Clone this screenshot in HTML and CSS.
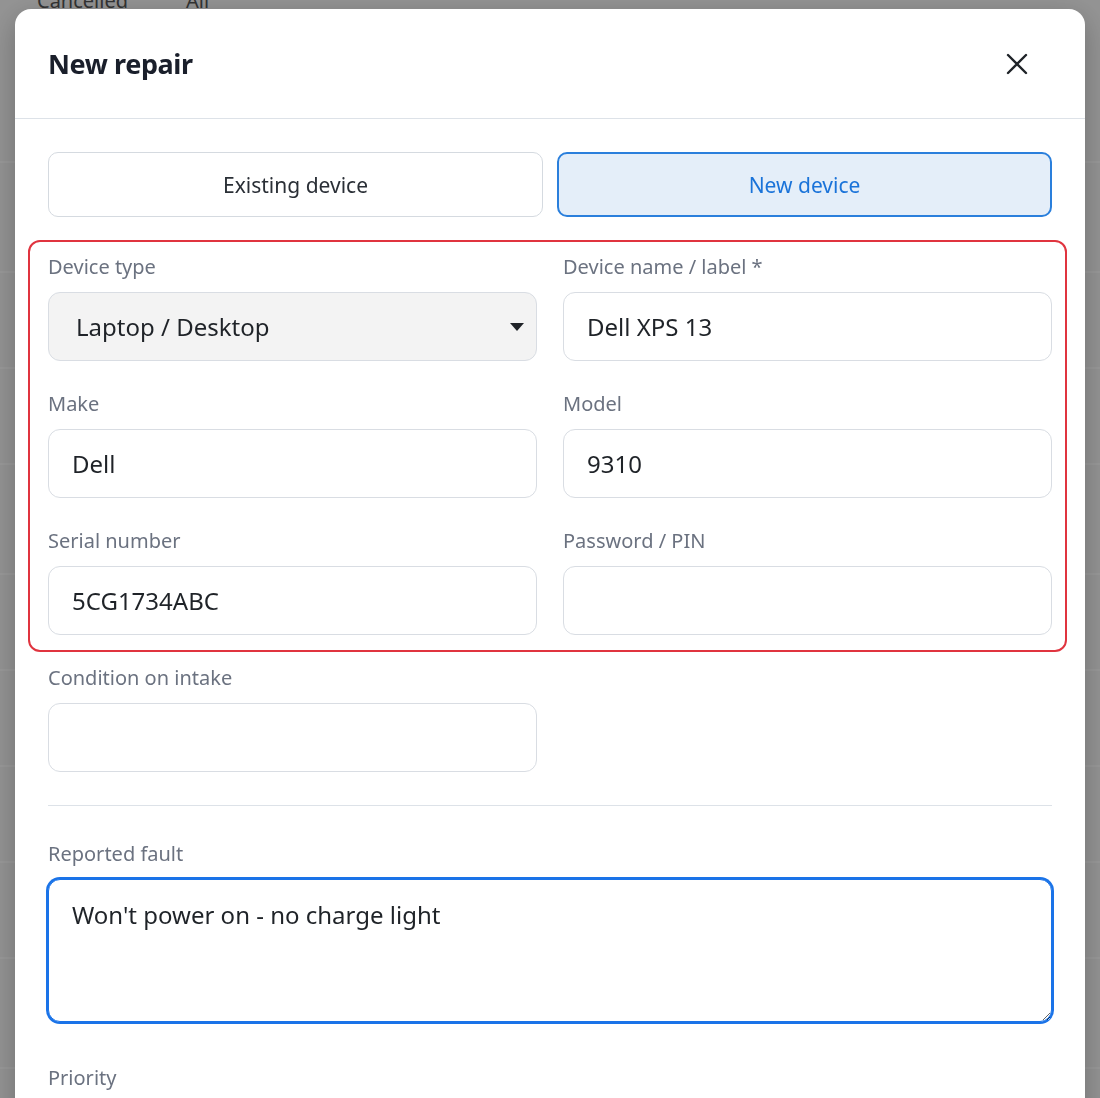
FILE: index.html
```html
<!DOCTYPE html>
<html lang="en">
<head>
  <meta charset="UTF-8">
  <title>New repair</title>
  <link rel="stylesheet" href="styles.css">
</head>
<body>

<div class="page">
  <div class="tabs">
    <span class="tab">Cancelled</span>
    <span class="tab">All</span>
  </div>
  <div class="rows">
    <div class="row"></div>
    <div class="row"></div>
    <div class="row short"></div>
    <div class="row short"></div>
    <div class="row"></div>
    <div class="row short"></div>
    <div class="row short"></div>
    <div class="row short"></div>
    <div class="row short"></div>
    <div class="row"></div>
  </div>
</div>

<div class="overlay">
  <div class="modal">
    <div class="modal-head">
      <h1 class="modal-title">New repair</h1>
      <button class="close-btn" aria-label="Close">
        <svg width="22" height="22" viewBox="0 0 22 22">
          <path d="M2 2 L20 20 M20 2 L2 20" stroke="#1f2328" stroke-width="2.4" stroke-linecap="round" fill="none"/>
        </svg>
      </button>
    </div>

    <div class="modal-body">
      <div class="toggle">
        <button class="toggle-btn">Existing device</button>
        <button class="toggle-btn active">New device</button>
      </div>

      <div class="group">
        <div class="grid">
          <div class="field">
            <label class="label">Device type</label>
            <div class="select-wrap">
              <select class="input select">
                <option>Laptop / Desktop</option>
                <option>Phone</option>
                <option>Tablet</option>
              </select>
              <svg class="caret" width="16" height="10" viewBox="0 0 16 10">
                <path d="M1 1 L15 1 L8 9 Z" fill="#1f2328"/>
              </svg>
            </div>
          </div>
          <div class="field">
            <label class="label">Device name / label *</label>
            <input class="input" type="text" value="Dell XPS 13">
          </div>
          <div class="field">
            <label class="label">Make</label>
            <input class="input" type="text" value="Dell">
          </div>
          <div class="field">
            <label class="label">Model</label>
            <input class="input" type="text" value="9310">
          </div>
          <div class="field">
            <label class="label">Serial number</label>
            <input class="input" type="text" value="5CG1734ABC">
          </div>
          <div class="field">
            <label class="label">Password / PIN</label>
            <input class="input" type="text" value="">
          </div>
        </div>
      </div>

      <div class="grid single">
        <div class="field">
          <label class="label">Condition on intake</label>
          <input class="input" type="text" value="">
        </div>
      </div>

      <hr class="divider">

      <div class="field fault">
        <label class="label">Reported fault</label>
        <textarea class="input textarea">Won't power on - no charge light</textarea>
      </div>

      <div class="field priority">
        <label class="label">Priority</label>
      </div>
    </div>
  </div>
</div>

</body>
</html>
```

FILE: styles.css
```css
* {
  box-sizing: border-box;
}
body {
  margin: 0;
  font-family: "Noto Sans", "Open Sans", sans-serif;
  background: #f6f6f6;
  color: #1f2328;
}

/* page behind the dialog */
.page {
  height: 1098px;
  overflow: hidden;
}
.tabs {
  display: flex;
  gap: 58px;
  padding-left: 37px;
  margin-top: -13px;
  font-size: 20px;
  color: #555;
}
.rows {
  margin-top: 39px;
}
.row {
  height: 110px;
  border-bottom: 2px solid #ffffff;
}
.row.short {
  height: 96px;
}

.overlay {
  position: fixed;
  inset: 0;
  background: rgba(0, 0, 0, 0.4);
  padding: 9px 15px 0;
  overflow: hidden;
}
.modal {
  width: 1070px;
  background: #ffffff;
  border-radius: 16px;
  box-shadow: 0 8px 30px rgba(0, 0, 0, 0.25);
  padding-bottom: 60px;
}
.modal-head {
  height: 110px;
  display: flex;
  align-items: center;
  justify-content: space-between;
  padding: 0 46px 0 33px;
  border-bottom: 1px solid #dde2e8;
}
.modal-title {
  margin: 0;
  font-size: 27px;
  font-weight: 700;
  color: #1a1f2b;
  letter-spacing: -0.4px;
}
.close-btn {
  width: 44px;
  height: 44px;
  border: none;
  background: none;
  display: flex;
  align-items: center;
  justify-content: center;
  padding: 0;
  cursor: pointer;
}

.modal-body {
  padding: 33px 33px 0;
}

.toggle {
  display: grid;
  grid-template-columns: 1fr 1fr;
  gap: 14px;
}
.toggle-btn {
  height: 65px;
  border: 1px solid #d5dae0;
  border-radius: 10px;
  background: #ffffff;
  font-family: inherit;
  font-size: 21px;
  color: #2a2f36;
  cursor: pointer;
}
.toggle-btn.active {
  border: 2px solid #2a7fdc;
  background: #e4eef9;
  color: #1a73d9;
}

.group {
  margin: 23px -15px 0 -20px;
  padding: 13px 13px 15px 18px;
  border: 2px solid #e0343f;
  border-radius: 12px;
}
.grid {
  display: grid;
  grid-template-columns: 1fr 1fr;
  column-gap: 26px;
  row-gap: 31px;
}
.grid.single {
  margin-top: 14px;
}
.field {
  display: flex;
  flex-direction: column;
}
.label {
  font-size: 20px;
  line-height: 24px;
  color: #6b7280;
  margin-bottom: 13px;
}
.input {
  height: 69px;
  width: 100%;
  border: 1px solid #d9dde3;
  border-radius: 12px;
  padding: 0 23px;
  font-family: inherit;
  font-size: 24px;
  color: #1f2328;
  background: #ffffff;
  outline: none;
}
.select-wrap {
  position: relative;
}
.select {
  appearance: none;
  background: #f3f3f3;
  padding-left: 27px;
}
.caret {
  position: absolute;
  right: 12px;
  top: 30px;
}

.divider {
  border: none;
  border-top: 1px solid #dde2e8;
  margin: 33px 0 0;
}
.fault {
  margin-top: 36px;
}
.textarea {
  height: 143px;
  padding: 20px 23px;
  line-height: 30px;
  border-color: #1a73e8;
  box-shadow: 0 0 0 2px #1a73e8;
  resize: vertical;
}
.priority {
  margin-top: 44px;
}
```
